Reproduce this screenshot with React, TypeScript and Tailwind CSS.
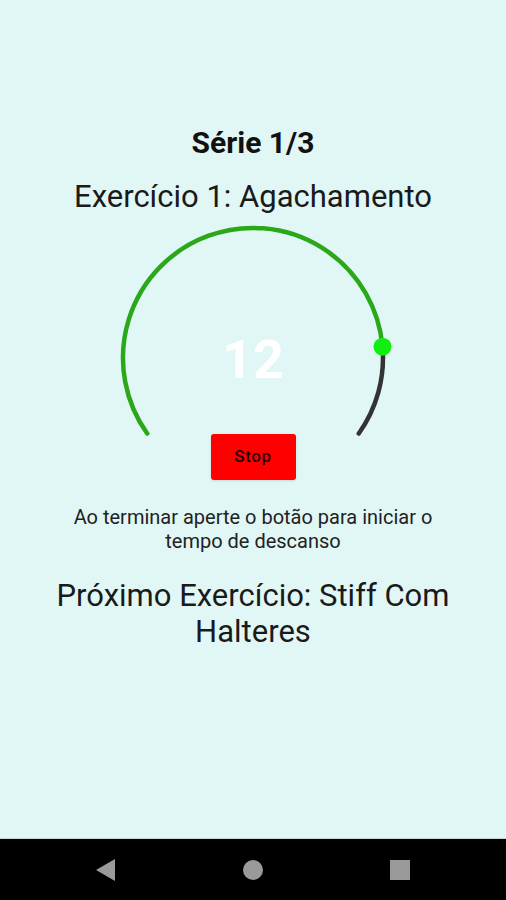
export default function App() {
  return (
    <div className="flex h-[900px] w-[506px] flex-col bg-[#e1f7f5] font-['Roboto',sans-serif]">
      <div className="flex flex-1 flex-col items-center pt-[124px]">
        <h1 className="text-[30px] font-bold leading-[38px] text-[#111]">Série 1/3</h1>
        <p className="mt-[16px] text-[31px] leading-[38px] text-[#1a1a1a]">Exercício 1: Agachamento</p>

        <div className="relative mt-[8px] h-[210px] w-[280px]">
          <svg width="280" height="212" viewBox="0 0 280 212">
            <path
              d="M 34.2 209.5 A 130 130 0 1 1 269.5 122.7"
              fill="none"
              stroke="#2aa81a"
              strokeWidth="4.5"
              strokeLinecap="round"
            />
            <path
              d="M 269.5 122.7 A 130 130 0 0 1 245.8 209.5"
              fill="none"
              stroke="#333"
              strokeWidth="4.5"
              strokeLinecap="round"
            />
            <circle cx="269.5" cy="122.7" r="9" fill="#11ee11" />
          </svg>
          <span className="absolute left-0 right-0 top-[104px] text-center text-[54px] font-bold leading-[64px] text-white">
            12
          </span>
        </div>

        <button className="h-[46px] w-[85px] rounded-[3px] bg-[#ff0000] text-[17px] font-medium tracking-[0.6px] text-[#2a0000] shadow-sm">
          Stop
        </button>

        <p className="mt-[25px] w-[400px] text-center text-[20px] leading-[24px] text-[#222]">
          Ao terminar aperte o botão para iniciar o tempo de descanso
        </p>

        <p className="mt-[25px] w-[430px] text-center text-[31px] leading-[36px] text-[#1a1a1a]">
          Próximo Exercício: Stiff Com Halteres
        </p>
      </div>

      <nav className="flex h-[62px] items-center justify-center gap-[127px] border-t border-[#c9d6d4] bg-black">
        <svg width="20" height="22" viewBox="0 0 20 22">
          <polygon points="19,0 19,22 0,11" fill="#9a9a9a" />
        </svg>
        <span className="h-[20px] w-[20px] rounded-full bg-[#9a9a9a]" />
        <span className="h-[20px] w-[20px] bg-[#9a9a9a]" />
      </nav>
    </div>
  );
}
